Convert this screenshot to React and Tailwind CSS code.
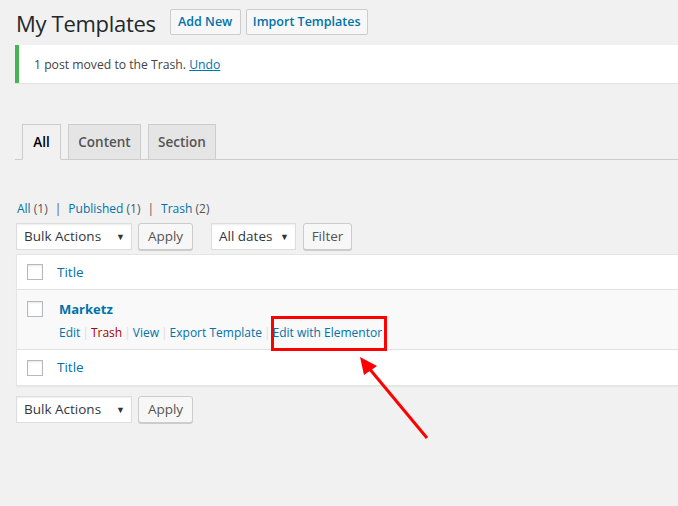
import React from "react";

function Checkbox() {
  return (
    <span className="block w-[16px] h-[16px] border border-[#b4b9be] bg-white shadow-[inset_0_1px_2px_rgba(0,0,0,0.1)]" />
  );
}

function Select({ label, width }) {
  return (
    <div
      className={`flex items-center justify-between h-[27px] bg-white border border-[#ddd] shadow-[inset_0_1px_2px_rgba(0,0,0,0.07)] pl-[7px] pr-[6px] text-[13.5px] text-[#32373c] ${width}`}
    >
      <span>{label}</span>
      <span className="text-[9px] text-[#333]">▼</span>
    </div>
  );
}

function Button({ children, width }) {
  return (
    <div
      className={`flex items-center justify-center h-[27px] bg-[#f7f7f7] border border-[#ccc] rounded-[3px] shadow-[0_1px_0_#ccc] text-[13.5px] text-[#555] ${width}`}
    >
      {children}
    </div>
  );
}

function Sep() {
  return <span className="text-[#ddd] px-[2px]">|</span>;
}

export default function App() {
  return (
    <div className="relative w-[678px] h-[506px] overflow-hidden bg-[#f1f1f1] font-['Open_Sans',sans-serif] text-[#444]">
      <div className="pl-[15px]">
        {/* header */}
        <div className="flex items-center pt-[9px] h-[35px]">
          <h1 className="text-[22px] leading-[26px] text-[#23282d] ml-[1px] pt-[2px] tracking-[-0.3px]">My Templates</h1>
          <div className="ml-[14px] flex items-center justify-center h-[26px] w-[71px] bg-[#f7f7f7] border border-[#ccc] rounded-[2px] text-[12.5px] font-semibold text-[#0073aa] pt-[1px]">
            Add New
          </div>
          <div className="ml-[5px] flex items-center justify-center h-[26px] w-[122px] bg-[#f7f7f7] border border-[#ccc] rounded-[2px] text-[12.5px] font-semibold text-[#0073aa] pt-[1px]">
            Import Templates
          </div>
        </div>

        {/* notice */}
        <div className="mt-[10px] h-[38px] flex items-center bg-white border-l-4 border-[#46b450] shadow-[0_1px_1px_rgba(0,0,0,0.06)] pl-[15px] pt-[3px] text-[12.2px] text-[#444]">
          1 post moved to the Trash.&nbsp;<span className="text-[#0073aa] underline">Undo</span>
        </div>

        {/* tabs */}
        <div className="mt-[41px] flex items-end border-b border-[#ccc] pl-[7px] h-[36px]">
          <div className="h-[36px] w-[39px] flex items-center justify-center border border-[#ccc] border-b-[#f1f1f1] bg-[#f1f1f1] text-[13.5px] font-semibold text-black -mb-px">
            All
          </div>
          <div className="ml-[7px] h-[35px] w-[73px] flex items-center justify-center border border-[#ccc] border-b-0 bg-[#e5e5e5] text-[13.5px] font-semibold text-[#555]">
            Content
          </div>
          <div className="ml-[7px] h-[35px] w-[68px] flex items-center justify-center border border-[#ccc] border-b-0 bg-[#e5e5e5] text-[13.5px] font-semibold text-[#555]">
            Section
          </div>
        </div>

        {/* subsubsub */}
        <div className="mt-[39px] h-[20px] flex items-center pl-[2px] text-[12px] text-[#555]">
          <span className="text-[#0073aa]">All</span>&nbsp;(1)
          <span className="px-[7px] text-[#555]">|</span>
          <span className="text-[#0073aa]">Published</span>&nbsp;(1)
          <span className="px-[7px] text-[#555]">|</span>
          <span className="text-[#0073aa]">Trash</span>&nbsp;(2)
        </div>

        {/* top actions */}
        <div className="mt-[4px] flex items-center pl-[1px]">
          <Select label="Bulk Actions" width="w-[116px]" />
          <div className="ml-[6px]">
            <Button width="w-[55px]">Apply</Button>
          </div>
          <div className="ml-[18px]">
            <Select label="All dates" width="w-[85px]" />
          </div>
          <div className="ml-[7px]">
            <Button width="w-[49px]">Filter</Button>
          </div>
        </div>

        {/* table */}
        <div className="mt-[4px] ml-[1px] w-[700px] bg-white border border-[#e5e5e5] shadow-[0_1px_1px_rgba(0,0,0,0.04)]">
          <div className="h-[35px] flex items-center border-b border-[#e1e1e1]">
            <div className="pl-[10px] w-[40px]"><Checkbox /></div>
            <span className="text-[13.5px] text-[#0073aa]">Title</span>
          </div>
          <div className="h-[60px] flex bg-[#f9f9f9] border-b border-[#e1e1e1]">
            <div className="pl-[10px] w-[40px] pt-[11px]"><Checkbox /></div>
            <div className="pl-[2px] pt-[9px]">
              <div className="text-[13px] font-bold text-[#0073aa] leading-[20px]">Marketz</div>
              <div className="mt-[4px] text-[12px] leading-[20px] text-[#0073aa] flex items-center">
                <span>Edit</span><Sep />
                <span className="text-[#a00]">Trash</span><Sep />
                <span>View</span><Sep />
                <span>Export Template</span><Sep />
                <span>Edit with Elementor</span>
              </div>
            </div>
          </div>
          <div className="h-[35px] flex items-center">
            <div className="pl-[10px] w-[40px]"><Checkbox /></div>
            <span className="text-[13.5px] text-[#0073aa]">Title</span>
          </div>
        </div>

        {/* bottom actions */}
        <div className="mt-[10px] flex items-center pl-[1px]">
          <Select label="Bulk Actions" width="w-[116px]" />
          <div className="ml-[6px]">
            <Button width="w-[55px]">Apply</Button>
          </div>
        </div>
      </div>

      {/* annotation overlay */}
      <svg className="absolute left-0 top-0 pointer-events-none" width="678" height="506">
        <rect x="272.5" y="317.5" width="113" height="32" fill="none" stroke="#ff0000" strokeWidth="3" />
        <line x1="427" y1="438" x2="368" y2="367" stroke="#ff0000" strokeWidth="3" />
        <polygon points="360,357 377,366 364,375" fill="#ff0000" />
      </svg>
    </div>
  );
}
